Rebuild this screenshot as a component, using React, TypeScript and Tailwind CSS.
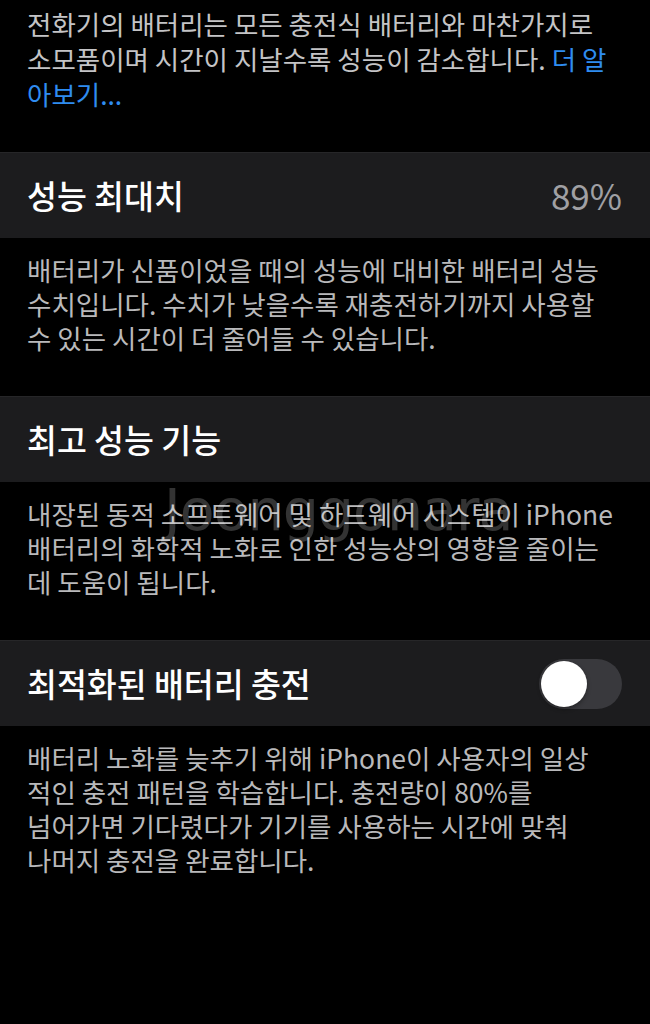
const FONT = "font-['Noto_Sans_CJK_KR','Noto_Sans',sans-serif]";

function Row({ title, children }: { title: string; children?: React.ReactNode }) {
  return (
    <div className="flex h-[86px] items-center justify-between border-t border-[#262628] bg-[#1c1c1e] pl-[27px] pr-[28px]">
      <span className="text-[32.5px] font-medium text-white">{title}</span>
      {children}
    </div>
  );
}

function Note({ lines }: { lines: string[] }) {
  return (
    <p className="pb-[41px] pl-[27px] pr-[10px] pt-[15px] text-[26.5px] leading-[34px] text-[#b9b9bb]">
      {lines.map((l) => (
        <span key={l} className="block whitespace-nowrap">
          {l}
        </span>
      ))}
    </p>
  );
}

function Toggle() {
  return (
    <div className="flex h-[50px] w-[83px] items-center rounded-full bg-[#39393d] px-[2px]">
      <div className="h-[46px] w-[46px] rounded-full bg-white shadow-[0_2px_4px_rgba(0,0,0,0.35)]" />
    </div>
  );
}

export default function App() {
  return (
    <div className={`relative min-h-[1024px] w-[650px] overflow-hidden bg-black ${FONT}`}>
      <p className="pb-[41px] pl-[27px] pr-[10px] pt-[6px] text-[26.5px] leading-[35px] text-[#c4c4c6]">
        <span className="block whitespace-nowrap">전화기의 배터리는 모든 충전식 배터리와 마찬가지로</span>
        <span className="block whitespace-nowrap">
          소모품이며 시간이 지날수록 성능이 감소합니다. <span className="text-[#2f8cf0]">더 알</span>
        </span>
        <span className="block whitespace-nowrap text-[#2f8cf0]">아보기...</span>
      </p>

      <Row title="성능 최대치">
        <span className="text-[35px] text-[#a0a0a4]">89%</span>
      </Row>
      <Note
        lines={[
          "배터리가 신품이었을 때의 성능에 대비한 배터리 성능",
          "수치입니다. 수치가 낮을수록 재충전하기까지 사용할",
          "수 있는 시간이 더 줄어들 수 있습니다.",
        ]}
      />

      <Row title="최고 성능 기능" />
      <Note
        lines={[
          "내장된 동적 소프트웨어 및 하드웨어 시스템이 iPhone",
          "배터리의 화학적 노화로 인한 성능상의 영향을 줄이는",
          "데 도움이 됩니다.",
        ]}
      />

      <Row title="최적화된 배터리 충전">
        <Toggle />
      </Row>
      <Note
        lines={[
          "배터리 노화를 늦추기 위해 iPhone이 사용자의 일상",
          "적인 충전 패턴을 학습합니다. 충전량이 80%를",
          "넘어가면 기다렸다가 기기를 사용하는 시간에 맞춰",
          "나머지 충전을 완료합니다.",
        ]}
      />

      {/* watermark */}
      <div className="pointer-events-none absolute left-[164px] top-[468px] font-['DejaVu_Sans',sans-serif] text-[57px] tracking-[-1px] text-white/20">
        Joonggonara
      </div>
    </div>
  );
}
